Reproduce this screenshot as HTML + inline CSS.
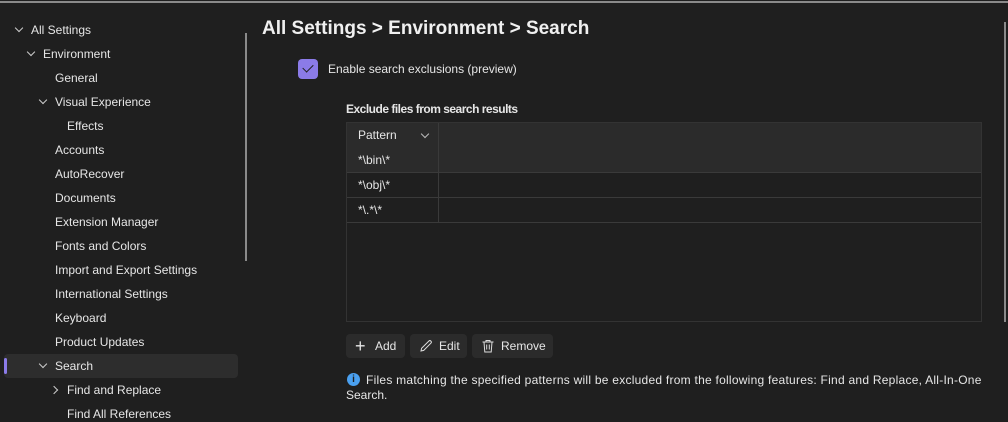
<!DOCTYPE html><html><head><style>
body{margin:0;width:1008px;height:421px;background:#1f1f1f;font-family:"Liberation Sans",sans-serif;color:#e6e6e6;position:relative;overflow:hidden;font-size:12px}
.t{position:absolute;white-space:nowrap;line-height:16px}
.ch{position:absolute;width:5px;height:5px;border-right:1px solid #ccc;border-bottom:1px solid #ccc;transform:rotate(45deg)}
.cr{position:absolute;width:5px;height:5px;border-right:1px solid #ccc;border-bottom:1px solid #ccc;transform:rotate(-45deg)}
.btn{position:absolute;top:334px;height:24px;background:#2b2b2b;border-radius:4px;line-height:24px;font-size:12px}
</style></head><body>
<div style="position:absolute;left:0;top:1px;width:1008px;height:2px;background:#8a8a8a"></div>
<div style="position:absolute;left:245px;top:33px;width:2px;height:228px;background:#8a8a8a"></div>
<div style="position:absolute;left:1004px;top:22px;width:2px;height:300px;background:#8a8a8a"></div>

<div style="position:absolute;left:4px;top:354px;width:234px;height:24px;background:#2d2d2d;border-radius:4px"></div>
<div style="position:absolute;left:4px;top:358px;width:3px;height:16px;background:#8b7be8;border-radius:2px"></div>

<div class="ch" style="left:16px;top:25px"></div><div class="t" style="left:31px;top:22px">All Settings</div>
<div class="ch" style="left:28px;top:49px"></div><div class="t" style="left:43px;top:46px">Environment</div>
<div class="t" style="left:55px;top:70px">General</div>
<div class="ch" style="left:40px;top:97px"></div><div class="t" style="left:55px;top:94px">Visual Experience</div>
<div class="t" style="left:67px;top:118px">Effects</div>
<div class="t" style="left:55px;top:142px">Accounts</div>
<div class="t" style="left:55px;top:166px">AutoRecover</div>
<div class="t" style="left:55px;top:190px">Documents</div>
<div class="t" style="left:55px;top:214px">Extension Manager</div>
<div class="t" style="left:55px;top:238px">Fonts and Colors</div>
<div class="t" style="left:55px;top:262px">Import and Export Settings</div>
<div class="t" style="left:55px;top:286px">International Settings</div>
<div class="t" style="left:55px;top:310px">Keyboard</div>
<div class="t" style="left:55px;top:334px">Product Updates</div>
<div class="ch" style="left:40px;top:361px"></div><div class="t" style="left:55px;top:358px">Search</div>
<div class="cr" style="left:51px;top:387px"></div><div class="t" style="left:67px;top:382px">Find and Replace</div>
<div class="t" style="left:67px;top:406px">Find All References</div>

<div class="t" style="left:262px;top:17px;font-size:19px;line-height:24px;font-weight:bold;color:#f0f0f0">All Settings &gt; Environment &gt; Search</div>

<div style="position:absolute;left:298px;top:59px;width:20px;height:20px;background:#8b7be8;border-radius:4px"></div>
<div style="position:absolute;left:305px;top:62px;width:5px;height:9px;border-right:1.5px solid #1f1f1f;border-bottom:1.5px solid #1f1f1f;transform:rotate(45deg)"></div>
<div class="t" style="left:328px;top:61px">Enable search exclusions (preview)</div>

<div class="t" style="left:346px;top:101px;font-weight:bold;letter-spacing:-0.5px">Exclude files from search results</div>

<div style="position:absolute;left:346px;top:122px;width:634px;height:198px;border:1px solid #333;background:#1f1f1f"></div>
<div style="position:absolute;left:347px;top:123px;width:634px;height:49px;background:#2b2b2b"></div>
<div style="position:absolute;left:347px;top:172px;width:634px;height:1px;background:#3a3a3a"></div>
<div style="position:absolute;left:347px;top:197px;width:634px;height:1px;background:#3a3a3a"></div>
<div style="position:absolute;left:347px;top:222px;width:634px;height:1px;background:#3a3a3a"></div>
<div style="position:absolute;left:438px;top:123px;width:1px;height:99px;background:#3a3a3a"></div>
<div class="t" style="left:358px;top:127px">Pattern</div>
<div class="ch" style="left:422px;top:131px;border-color:#bbb"></div>
<div class="t" style="left:358px;top:152px">*\bin\*</div>
<div class="t" style="left:358px;top:177px">*\obj\*</div>
<div class="t" style="left:358px;top:202px">*\.*\*</div>

<div class="btn" style="left:346px;width:59px"><span style="position:absolute;left:9px;top:0;font-size:18px;font-weight:300">+</span><span style="position:absolute;left:29px">Add</span></div>
<div class="btn" style="left:410px;width:57px"><svg style="position:absolute;left:9px;top:5px" width="14" height="14" viewBox="0 0 14 14"><path d="M2 12 L2.6 9.3 L9.8 2.1 A1.3 1.3 0 0 1 11.9 4.2 L4.7 11.4 Z" fill="none" stroke="#ddd" stroke-width="1"/></svg><span style="position:absolute;left:29px">Edit</span></div>
<div class="btn" style="left:472px;width:81px"><svg style="position:absolute;left:9px;top:5px" width="14" height="14" viewBox="0 0 14 14"><path d="M1.5 3h11M5 3V1.5h4V3M3 3l.8 10h6.4L11 3M5.7 5.5v5M8.3 5.5v5" fill="none" stroke="#ddd" stroke-width="1"/></svg><span style="position:absolute;left:29px">Remove</span></div>

<div style="position:absolute;left:347px;top:373px;width:13px;height:13px;border-radius:50%;background:#4aa0f0;color:#1f1f1f;font-size:10px;font-weight:bold;text-align:center;line-height:13px">i</div>
<div class="t" style="left:366px;top:372px;letter-spacing:0.25px">Files matching the specified patterns will be excluded from the following features: Find and Replace, All-In-One</div>
<div class="t" style="left:346px;top:387px">Search.</div>
</body></html>
